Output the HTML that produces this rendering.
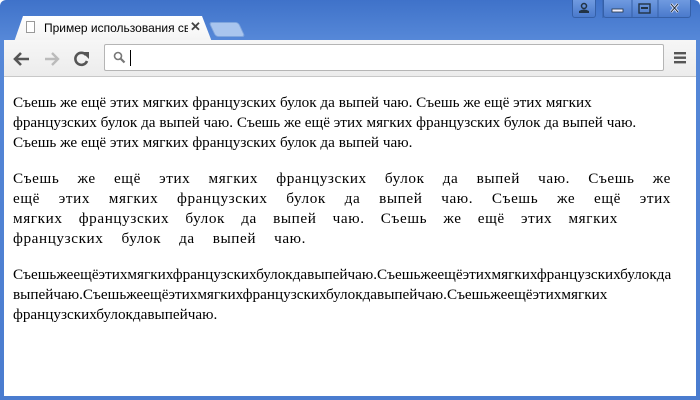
<!DOCTYPE html>
<html><head><meta charset="utf-8"><style>
*{margin:0;padding:0;box-sizing:border-box}
body{width:700px;height:400px;overflow:hidden;background:#fff;position:relative;font-family:"Liberation Serif",serif}
#frame{position:absolute;left:0;top:0;width:700px;height:400px;background:linear-gradient(#3f72c9,#5688d8 40px,#4a7ccf);border-radius:6px 6px 0 0}
#tab{position:absolute;left:14px;top:16px;width:198px;height:26px;background:linear-gradient(#fff,#f3f3f3);border-radius:5px 5px 0 0;clip-path:polygon(0 100%,9px 0,188px 0,100% 100%)}
#tab span{position:absolute;left:30px;top:5px;font:12px "Liberation Sans",sans-serif;color:#000;white-space:nowrap;width:144px;overflow:hidden}
#tab .x{position:absolute;left:176px;top:3px;font:bold 13px "Liberation Sans",sans-serif;color:#444}
#doc{position:absolute;left:26px;top:21px;width:9px;height:12px;border:1px solid #999;background:#fff}
#tab2{position:absolute;left:212px;top:22px;width:30px;height:15px;background:#a9c5ee;border:1px solid #7fa5dd;border-radius:3px;transform:skewX(25deg)}
#toolbar{position:absolute;left:4px;top:40px;width:692px;height:37px;background:linear-gradient(#f6f6f6,#ececec);border-bottom:1px solid #c8c8c8}
#omni{position:absolute;left:100px;top:4px;width:560px;height:27px;background:#fff;border:1px solid #b5b5b5;border-radius:2px}
#omni .cur{position:absolute;left:25px;top:5px;width:1px;height:16px;background:#000}
.ico{position:absolute;top:0}
#content{position:absolute;left:4px;top:77px;width:692px;height:319px;background:#fff;padding:16px 9px 0 9px;font-size:15.2px;line-height:20px;color:#000}
p{margin-bottom:16px;white-space:nowrap}
.j span{display:block;text-align:justify;text-align-last:justify;letter-spacing:.6px}
.wbtn{position:absolute;top:0;height:18px;background:linear-gradient(#6f9ae0,#4a7acc);border:1px solid #3560a8;border-top:none}
</style></head><body>
<div id="frame"></div>
<div class="wbtn" style="left:572px;width:24px;border-radius:0 0 3px 3px"></div>
<div class="wbtn" style="left:603px;width:88px;border-radius:0 0 3px 3px"></div>
<svg style="position:absolute;left:572px;top:0" width="120" height="18">
<circle cx="12" cy="6" r="2.5" fill="none" stroke="#234" stroke-width="1.5"/><path d="M7 13h10v-2q-5-3-10 0z" fill="#234"/>
<line x1="31" y1="0" x2="31" y2="18" stroke="#3560a8"/>
<rect x="40" y="9" width="11" height="3" fill="#eef" stroke="#234" stroke-width=".8"/>
<line x1="60" y1="0" x2="60" y2="18" stroke="#3560a8"/>
<rect x="67" y="4" width="11" height="9" fill="none" stroke="#234" stroke-width="1.4"/><rect x="69" y="7" width="7" height="2" fill="#234"/>
<line x1="86" y1="0" x2="86" y2="18" stroke="#3560a8"/>
<path d="M99 4l7 8M106 4l-7 8" stroke="#eef" stroke-width="2.6"/><path d="M99 4l7 8M106 4l-7 8" stroke="#234" stroke-width="1"/>
</svg>
<div id="tab"><span>Пример использования сво</span><span class="x" style="left:176px;width:auto">✕</span></div>
<div id="doc"></div>
<div id="tab2"></div>
<div id="toolbar">
<svg class="ico" width="100" height="37">
<path d="M11 19h14M17 13l-6 6 6 6" stroke="#555" stroke-width="2.6" fill="none"/>
<path d="M41 19h13M48 13l6 6-6 6" stroke="#bbb" stroke-width="2.4" fill="none"/>
<path d="M82 15a6 6 0 1 0 1 6" stroke="#555" stroke-width="2.6" fill="none"/><path d="M78 12h7v7z" fill="#555"/>
</svg>
<div id="omni"><svg width="20" height="25" style="position:absolute;left:5px;top:1px"><circle cx="8" cy="10" r="3.5" fill="none" stroke="#777" stroke-width="1.6"/><path d="M10.5 12.5l4 4" stroke="#777" stroke-width="2.2"/></svg><div class="cur"></div></div>
<svg style="position:absolute;left:670px;top:12px" width="14" height="12"><rect y="0" width="12" height="2.4" fill="#555"/><rect y="4.5" width="12" height="2.4" fill="#555"/><rect y="9" width="12" height="2.4" fill="#555"/></svg>
</div>
<div id="content">
<p>Съешь же ещё этих мягких французских булок да выпей чаю. Съешь же ещё этих мягких<br>французских булок да выпей чаю. Съешь же ещё этих мягких французских булок да выпей чаю.<br>Съешь же ещё этих мягких французских булок да выпей чаю.</p>
<p class="j" style="width:658px"><span>Съешь же ещё этих мягких французских булок да выпей чаю. Съешь же</span><span>ещё этих мягких французских булок да выпей чаю. Съешь же ещё этих</span><span>мягких французских булок да выпей чаю. Съешь же ещё этих мягких&nbsp;&nbsp;&nbsp;&nbsp;</span><span style="width:293px">французских булок да выпей чаю.</span></p>
<p>Съешьжеещёэтихмягкихфранцузскихбулокдавыпейчаю.Съешьжеещёэтихмягкихфранцузскихбулокда<br>выпейчаю.Съешьжеещёэтихмягкихфранцузскихбулокдавыпейчаю.Съешьжеещёэтихмягких<br>французскихбулокдавыпейчаю.</p>
</div>
</body></html>
